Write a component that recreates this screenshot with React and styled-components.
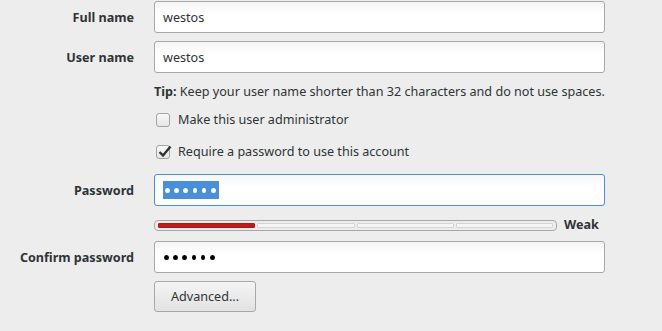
import React from 'react';
import styled, { createGlobalStyle } from 'styled-components';

const GlobalStyle = createGlobalStyle`
  html, body {
    margin: 0;
    padding: 0;
    background: #ededed;
  }
  body {
    font-family: 'Noto Sans', 'DejaVu Sans', sans-serif;
    font-size: 12.6px;
    color: #2e3436;
  }
`;

const Form = styled.div`
  display: flex;
  flex-direction: column;
  padding-top: 1px;
  width: 662px;
  height: 331px;
  box-sizing: border-box;
  overflow: hidden;
`;

const Row = styled.div`
  display: grid;
  grid-template-columns: 134px 451px auto;
  column-gap: 20px;
  align-items: center;
  height: ${p => p.$h}px;
  margin-top: ${p => p.$top || 0}px;
  flex: none;
`;

const Label = styled.div`
  grid-column: 1;
  text-align: right;
  font-weight: bold;
  line-height: 16px;
  padding-top: 1px;
`;

const Field = styled.div`
  grid-column: 2;
  display: flex;
  align-items: center;
  height: 100%;
  min-width: 0;
`;

const TextInput = styled.input`
  display: block;
  margin: 0;
  width: 100%;
  height: 32px;
  box-sizing: border-box;
  border: 1px solid #a8a8a8;
  border-radius: 3px;
  background: linear-gradient(#f6f6f6, #ffffff 40%);
  padding: 0 8px;
  font-family: inherit;
  font-size: 12.6px;
  color: #2e3436;
  outline: none;
`;

const FakeInput = styled.div`
  width: 100%;
  height: 32px;
  box-sizing: border-box;
  border: 1px solid ${p => (p.$focus ? '#4a90d9' : '#a8a8a8')};
  border-radius: 3px;
  background: linear-gradient(#f6f6f6, #ffffff 40%);
  padding: 0 0 0 ${p => (p.$focus ? 8 : 7)}px;
  display: flex;
  align-items: center;
`;

const Dots = styled.span`
  display: flex;
  align-items: center;
  gap: 4.6px;
  height: 18px;
  padding: 0 3px 0 2px;
  background: ${p => (p.$selected ? '#4a90d9' : 'transparent')};
`;

const Dot = styled.span`
  width: 4.6px;
  height: 5px;
  border-radius: 50%;
  background: ${p => (p.$light ? '#ffffff' : '#000000')};
`;

const Tip = styled.div`
  grid-column: 2 / span 2;
  white-space: nowrap;
  line-height: 18px;
  b {
    font-weight: bold;
  }
`;

const Check = styled.label`
  grid-column: 2;
  display: flex;
  align-items: center;
  gap: 8px;
  padding-left: 2px;
  line-height: 16px;
`;

const Box = styled.span`
  width: 14px;
  height: 14px;
  box-sizing: border-box;
  border: 1px solid #a3a3a3;
  border-radius: 3px;
  background: linear-gradient(#f8f8f8, #e6e6e6);
  position: relative;
  svg {
    position: absolute;
    left: 0px;
    top: -2px;
  }
`;

const Bar = styled.div`
  width: 403px;
  height: 11px;
  box-sizing: border-box;
  border: 1px solid #a8a8a8;
  border-radius: 4px;
  background: #ededed;
  padding: 2px 3px;
  display: flex;
  gap: 2px;
`;

const Segment = styled.div`
  flex: 1;
  border-radius: 1px;
  ${p =>
    p.$on
      ? 'background: #c01c1c; border: 1px solid #a51d1d;'
      : 'background: #f6f6f6; border: 1px solid #d4d4d4;'}
`;

const StrengthRow = styled.div`
  grid-column: 2 / span 2;
  display: flex;
  align-items: center;
  gap: 7px;
`;

const StrengthLabel = styled.span`
  font-weight: bold;
  line-height: 14px;
`;

const Button = styled.button`
  display: block;
  margin: 0;
  width: 102px;
  height: 31px;
  border: 1px solid #a8a8a8;
  border-radius: 3px;
  background: linear-gradient(#f4f4f4, #e2e2e2);
  font-family: inherit;
  font-size: 12.6px;
  color: #2e3436;
  padding: 0;
`;

const CheckMark = () => (
  <svg width="15" height="15" viewBox="0 0 15 15">
    <path d="M2.5 8 L6 11.5 L13.5 2.5" fill="none" stroke="#2e3436" strokeWidth="2.4" />
  </svg>
);

const sixDots = [0, 1, 2, 3, 4, 5];

export default function App() {
  return (
    <>
      <GlobalStyle />
      <Form>
        <Row $h={32}>
          <Label>Full name</Label>
          <Field>
            <TextInput readOnly value="westos" />
          </Field>
        </Row>

        <Row $h={32} $top={8}>
          <Label>User name</Label>
          <Field>
            <TextInput readOnly value="westos" />
          </Field>
        </Row>

        <Row $h={18} $top={10}>
          <Tip>
            <b>Tip:</b> Keep your user name shorter than 32 characters and do not use spaces.
          </Tip>
        </Row>

        <Row $h={18} $top={10}>
          <Check>
            <Box />
            Make this user administrator
          </Check>
        </Row>

        <Row $h={18} $top={14}>
          <Check>
            <Box>
              <CheckMark />
            </Box>
            Require a password to use this account
          </Check>
        </Row>

        <Row $h={32} $top={13}>
          <Label>Password</Label>
          <Field>
            <FakeInput $focus>
              <Dots $selected>
                {sixDots.map(i => (
                  <Dot key={i} $light />
                ))}
              </Dots>
            </FakeInput>
          </Field>
        </Row>

        <Row $h={12} $top={12}>
          <StrengthRow>
            <Bar>
              <Segment $on />
              <Segment />
              <Segment />
              <Segment />
            </Bar>
            <StrengthLabel>Weak</StrengthLabel>
          </StrengthRow>
        </Row>

        <Row $h={32} $top={11}>
          <Label>Confirm password</Label>
          <Field>
            <FakeInput>
              <Dots>
                {sixDots.map(i => (
                  <Dot key={i} />
                ))}
              </Dots>
            </FakeInput>
          </Field>
        </Row>

        <Row $h={31} $top={8}>
          <Field>
            <Button>Advanced...</Button>
          </Field>
        </Row>
      </Form>
    </>
  );
}
